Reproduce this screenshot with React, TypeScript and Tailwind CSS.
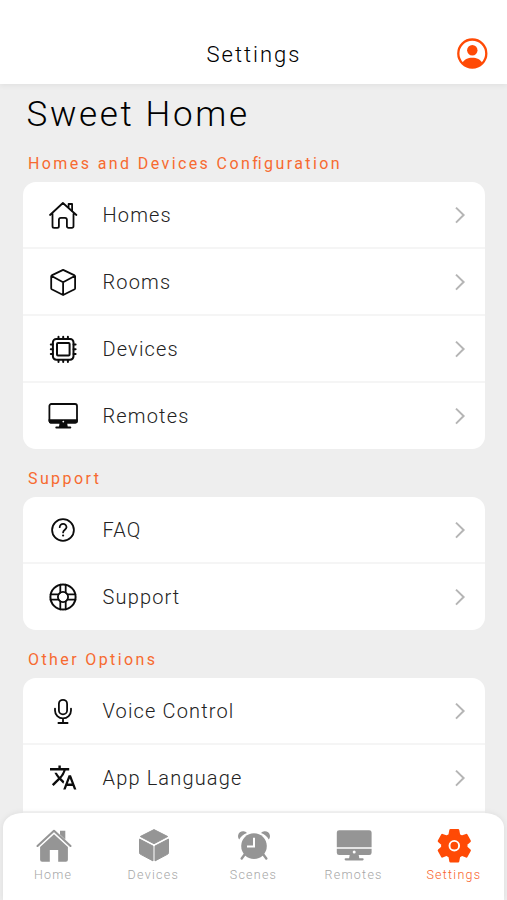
import React from 'react';

const HomeOutline = () => (
  <g>
    <path d="M3 16 15.9 4 29.4 16 M5.5 14.5V27.2a1.6 1.6 0 0 0 1.6 1.6h3.2a1.6 1.6 0 0 0 1.6-1.6V20.8a2 2 0 0 1 2-2h4a2 2 0 0 1 2 2v6.4a1.6 1.6 0 0 0 1.6 1.6h3.4a1.6 1.6 0 0 0 1.6-1.6V14.5" />
    <path d="M21.6 8V5h3.5v6.8" />
  </g>
);

const CubeOutline = () => (
  <path d="M16.1 3.9 27.6 9.4q.5.3.5 1V22.2q0 .7-.5 1L16.1 29 4.7 23.2q-.5-.3-.5-1V10.4q0-.7.5-1ZM4.6 10 16.1 16.3 27.7 10M16.1 16.3V28.6" />
);

const Chip = () => (
  <g>
    <rect x="5.9" y="5.9" width="20.6" height="20.8" rx="3.4" strokeWidth="2" />
    <rect x="10" y="10" width="12.6" height="12.6" rx="1" strokeWidth="2" />
    <path
      strokeWidth="2"
      d="M11.5 3.8v2M16.2 3.8v2M20.9 3.8v2M11.5 27v2M16.2 27v2M20.9 27v2M3.8 11.6h2M3.8 16.3h2M3.8 21h2M26.6 11.6h2M26.6 16.3h2M26.6 21h2"
    />
  </g>
);

const Monitor = () => (
  <g>
    <rect x="2.4" y="4" width="27.6" height="18.6" rx="2" />
    <path
      fill="currentColor"
      stroke="none"
      d="M1.6 19.3h29.2v1.9a2.4 2.4 0 0 1-2.4 2.4h-8.2l.5 2.900h2.600a1 1 0 0 1 0 2H9.300a1 1 0 0 1 0-2H12l.5-2.900H4A2.400 2.400 0 0 1 1.600 21.200Z"
    />
    <circle cx="16.3" cy="21.6" r=".9" fill="#fff" stroke="none" />
  </g>
);

const Question = () => (
  <g>
    <circle cx="16" cy="16" r="10.9" />
    <path d="M12.7 13.2a3.4 3.4 0 0 1 6.8 0c0 2.3-3.4 2.7-3.4 5.2" />
    <circle cx="16.1" cy="21.5" r="1.1" fill="currentColor" stroke="none" />
  </g>
);

const Lifebuoy = () => (
  <g>
    <circle cx="16" cy="16" r="12.6" strokeWidth="2" />
    <circle cx="16" cy="16" r="5.1" />
    <path d="M13.3 3.6v7.9M18.7 3.6v7.9M13.3 20.5v7.9M18.7 20.5v7.9M3.6 13.3h7.9M3.6 18.7h7.9M20.5 13.3h7.9M20.5 18.7h7.9" />
  </g>
);

const Mic = () => (
  <path d="M16 4.8a4.1 4.1 0 0 1 4.1 4.1v6.4a4.1 4.1 0 0 1-8.2 0V8.9A4.1 4.1 0 0 1 16 4.8ZM8 13.6v1.8a8 8 0 0 0 16 0v-1.8M16 23.4V28M11.4 28h9.2" />
);

const Translate = () => (
  <path
    transform="translate(1.8 1.2) scale(1.2)"
    fill="currentColor"
    stroke="none"
    d="M12.87 15.07l-2.54-2.51.03-.03A17.52 17.52 0 0014.07 6H17V4h-7V2H8v2H1v2h11.17C11.5 7.92 10.44 9.75 9 11.35 8.07 10.32 7.3 9.19 6.69 8h-2c.73 1.63 1.73 3.17 2.98 4.56l-5.09 5.02L4 19l5-5 3.11 3.11.76-2.04zM18.5 10h-2L12 22h2l1.12-3h4.75L21 22h2l-4.5-12zm-2.62 7l1.62-4.33L19.12 17h-3.24z"
  />
);

type Item = { label: string; icon: React.ReactNode };

const Row = ({ label, icon, last }: Item & { last: boolean }) => (
  <li
    className={
      'flex items-center border-[#f5f5f5] pl-[23.5px] pr-[19px] ' + (last ? 'h-[66px]' : 'h-[67.1px] border-b-2')
    }
  >
    <svg
      className="size-8 shrink-0 text-[#0c0c0c]"
      viewBox="0 0 32 32"
      fill="none"
      stroke="currentColor"
      strokeWidth="1.8"
      strokeLinecap="round"
      strokeLinejoin="round"
    >
      {icon}
    </svg>
    <span className="ml-6 flex-1 text-[20px] font-light leading-6 tracking-[1.15px] text-[#222]">{label}</span>
    <svg className="h-5 w-3" viewBox="0 0 12 20" fill="none" stroke="#b5b5b5" strokeWidth="2">
      <path d="M2 2.6 9.6 10 2 17.6" />
    </svg>
  </li>
);

type SectionProps = { title: React.ReactNode; items: Item[]; className: string; continues?: boolean };

const Section = ({ title, items, className, continues = false }: SectionProps) => (
  <section className={className}>
    <h2 className="pl-[5px] pt-px text-[16px] leading-5 tracking-[2.4px] text-[#f76a30]">{title}</h2>
    <ul className={'mt-2 overflow-hidden rounded-[13px] bg-white ' + (continues ? 'pb-12' : '')}>
      {items.map((item, index) => (
        <Row key={item.label} {...item} last={!continues && index === items.length - 1} />
      ))}
    </ul>
  </section>
);

const tabs: Item[] = [
  {
    label: 'Home',
    icon: (
      <g>
        <path
          d="M2.5 18 19 2.800 35.500 18"
          fill="none"
          stroke="currentColor"
          strokeWidth="2.1"
          strokeLinecap="round"
          strokeLinejoin="round"
        />
        <path d="M25 2.800h5.300v8.600L25 6.600Z" />
        <path d="M19 6.300 32.900 19V31.800a2 2 0 0 1-2 2h-7.700V22h-8.400v11.800H7.100a2 2 0 0 1-2-2V19Z" />
      </g>
    ),
  },
  {
    label: 'Devices',
    icon: (
      <path
        stroke="currentColor"
        strokeLinejoin="round"
        d="M19 1.6 32.7 8.5 19 15.7 5.3 8.5ZM4.5 11.1 18 18.1V32.9L5.2 26.1Q4.5 25.8 4.5 24.8ZM33.5 11.1 20 18.1V32.9L32.8 26.1Q33.5 25.8 33.5 24.8Z"
      />
    ),
  },
  {
    label: 'Scenes',
    icon: (
      <g>
        <path d="M4.2 11.5A4.5 4.5 0 1 1 12 5A15 15 0 0 0 4.2 11.5ZM33.8 11.5A4.5 4.5 0 1 0 26 5a15 15 0 0 1 7.8 6.5Z" />
        <path d="m10 26-3.300 4.500M28 26l3.300 4.500" stroke="currentColor" strokeWidth="2.400" strokeLinecap="round" />
        <circle cx="19" cy="18.1" r="12.800" />
        <path d="M19 9.700v8.800h-7" fill="none" stroke="#fff" strokeWidth="2" />
      </g>
    ),
  },
  {
    label: 'Remotes',
    icon: (
      <g>
        <path d="M4.2 2.2h30a2.4 2.4 0 0 1 2.4 2.4v14.6h-34.8V4.6a2.4 2.4 0 0 1 2.4-2.4ZM1.8 20.8h34.8v3.9a2.4 2.4 0 0 1-2.4 2.4h-10.5l.6 3.1h3.3a1 1 0 0 1 0 2.2H10.7a1 1 0 0 1 0-2.2h3.4l.6-3.1H4.2a2.4 2.4 0 0 1-2.4-2.4Z" />
        <circle cx="19.2" cy="24" r="1.500" fill="#fff" />
      </g>
    ),
  },
  {
    label: 'Settings',
    icon: (
      <g>
        <path
          stroke="currentColor"
          strokeWidth="2.4"
          strokeLinejoin="round"
          d="M15.500 2.100h7.600l.9 4.900 2.900 1.700 4.500-1.700 3.300 6-3.400 3v3.400l3.400 3-3.300 6-4.500-1.700-2.900 1.700-.9 4.900h-7.600l-.9-4.900-2.900-1.700-4.500 1.700-3.300-6 3.400-3v-3.400l-3.400-3 3.300-6 4.500 1.700 2.900-1.700Z"
        />
        <circle cx="19.3" cy="17.7" r="4.800" fill="none" stroke="#fff" strokeWidth="1.900" />
      </g>
    ),
  },
];

export default function App() {
  return (
    <div className="relative flex h-[900px] w-[507px] flex-col overflow-hidden bg-[#eeeeee] font-['Roboto',sans-serif]">
      <header className="grid h-[84px] shrink-0 grid-cols-[1fr_auto_1fr] items-center bg-white pt-[23px] shadow-[0_2px_5px_rgba(0,0,0,0.05)]">
        <h1 className="col-start-2 pl-px pt-[2px] text-[22px] font-light leading-7 tracking-[2px] text-black">Settings</h1>
        <svg className="mr-[18px] size-8 justify-self-end text-[#ff4a05]" viewBox="0 0 32 32">
          <circle cx="15.3" cy="15.5" r="14" fill="none" stroke="currentColor" strokeWidth="2.3" />
          <circle cx="15.3" cy="12.3" r="5.2" fill="currentColor" />
          <path d="M5.3 25.2C7.1 21.4 10.8 19.8 15.3 19.8s8.2 1.6 10 5.4A14.6 14.6 0 0 1 5.3 25.2Z" fill="currentColor" />
        </svg>
      </header>
      <main className="pl-[23px] pr-[22px]">
        <p className="mt-[11px] pl-[3.5px] text-[35px] font-light leading-10 tracking-[2.65px] text-black">Sweet Home</p>
        <Section
          className="mt-[18px]"
          title={
            <>
              Homes and Devices Con<span className="tracking-[0px]">f</span>iguration
            </>
          }
          items={[
            { label: 'Homes', icon: <HomeOutline /> },
            { label: 'Rooms', icon: <CubeOutline /> },
            { label: 'Devices', icon: <Chip /> },
            { label: 'Remotes', icon: <Monitor /> },
          ]}
        />
        <Section
          className="mt-[19px]"
          title="Support"
          items={[
            { label: 'FAQ', icon: <Question /> },
            { label: 'Support', icon: <Lifebuoy /> },
          ]}
        />
        <Section
          className="mt-[19px]"
          title="Other Options"
          continues
          items={[
            { label: 'Voice Control', icon: <Mic /> },
            { label: 'App Language', icon: <Translate /> },
          ]}
        />
      </main>
      <nav className="absolute bottom-0 left-[3px] flex h-[87px] w-[501px] rounded-t-[20px_14px] bg-white pt-[15px] shadow-[0_0_6px_rgba(0,0,0,0.08)]">
        {tabs.map((t) => (
          <a
            key={t.label}
            className="flex w-[100.2px] flex-col items-center text-[#a6a6a6] last:text-[#f9622a]"
          >
            <svg
              className={'ml-px h-9 w-[38px] ' + (t.label === 'Settings' ? 'text-[#ff4a05]' : 'text-[#959595]')}
              viewBox="0 0 38 36"
              fill="currentColor"
            >
              {t.icon}
            </svg>
            <span className="mt-[3px] text-[12.5px] font-light leading-4 tracking-[1.25px]">{t.label}</span>
          </a>
        ))}
      </nav>
    </div>
  );
}
